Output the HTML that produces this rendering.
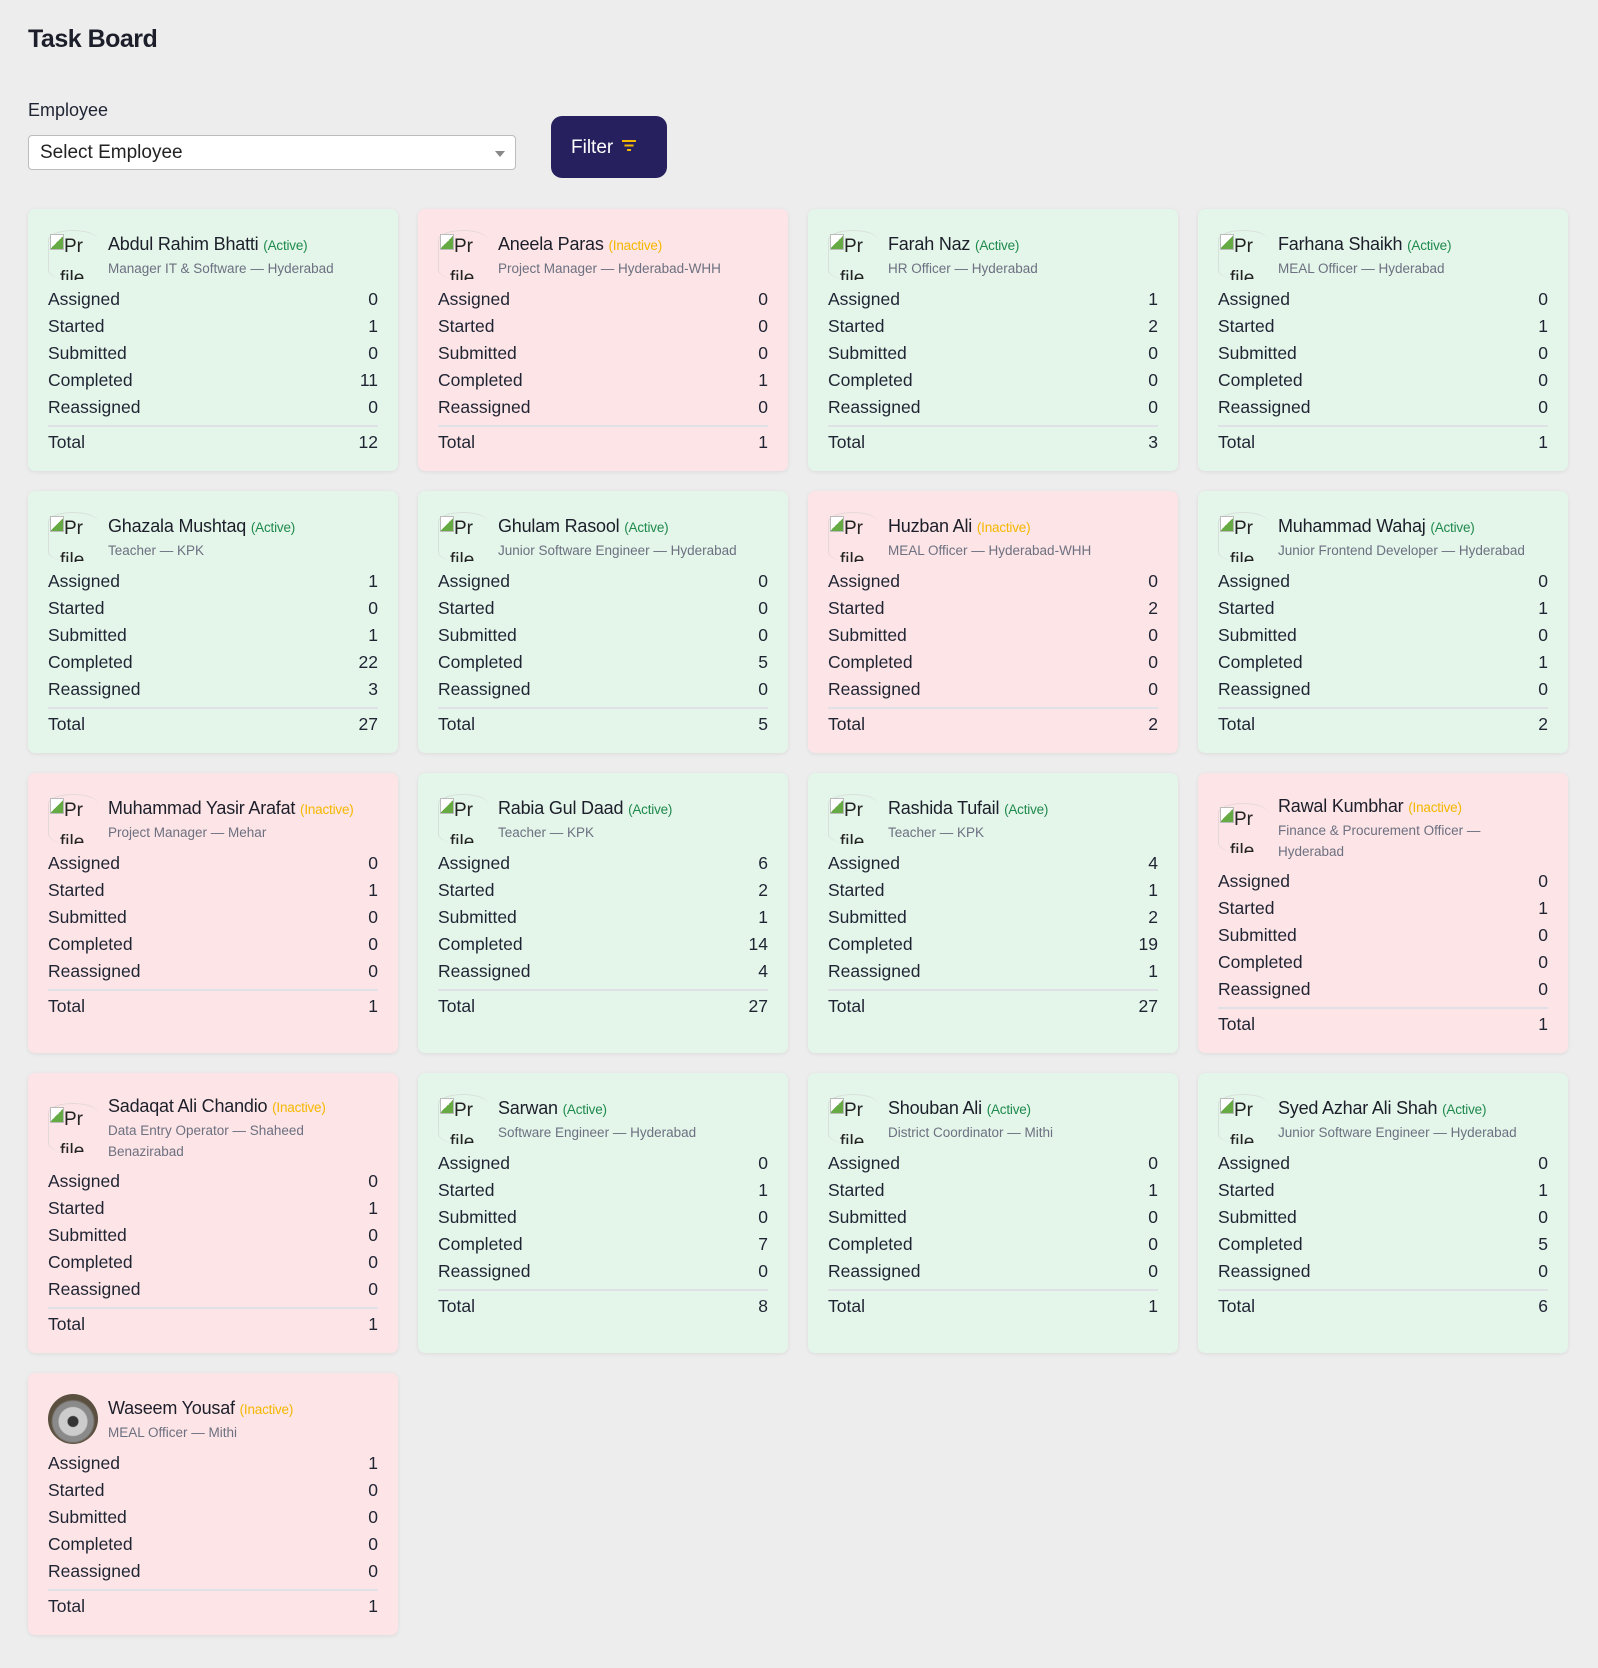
<!DOCTYPE html>
<html><head><meta charset="utf-8"><style>
*{box-sizing:border-box;margin:0;padding:0}
body{width:1598px;height:1668px;background:#ededed;font-family:"Liberation Sans",sans-serif;color:#1f2433;position:relative;overflow:hidden}
h1{position:absolute;left:28px;top:25px;font-size:25px;font-weight:bold;letter-spacing:-0.5px;color:#1c1f2a}
.lbl{position:absolute;left:28px;top:100px;font-size:18px;color:#1f2433}
.sel{position:absolute;left:28px;top:135px;width:488px;height:35px;background:#fff;border:1px solid #bcbcbc;border-radius:4px;font-size:19px;padding:6px 11px;color:#222}
.sel:after{content:"";position:absolute;right:10px;top:15px;border-left:5px solid transparent;border-right:5px solid transparent;border-top:6px solid #888}
.btn{position:absolute;left:551px;top:116px;width:116px;height:62px;background:#26215e;border-radius:11px;color:#fff;font-size:19px;padding:21px 0 0 20px}
.btn svg{position:absolute;left:70px;top:23px}
.grid{position:absolute;left:28px;top:209px;width:1540px;display:grid;grid-template-columns:repeat(4,370px);column-gap:20px;row-gap:20px}
.card{border-radius:7px;padding:21px 20px 17px 20px;box-shadow:0 1px 4px rgba(0,0,0,.08)}
.g{background:#e4f5ea}.p{background:#fde4e6}
.hd{display:flex;align-items:center;min-height:50px;margin-bottom:6px}
.av{width:50px;height:50px;flex:none;margin-right:10px;position:relative;overflow:hidden;font-size:19px;color:#222}
.av .ic{position:absolute;left:2px;top:4px;width:14px;height:16px;border:1px solid #bbb;background:linear-gradient(135deg,#fff 50%,#6a4 50%)}
.av .t1{position:absolute;left:16px;top:6px}
.av .t2{position:absolute;left:12px;top:38px}
.av .bd{position:absolute;left:0;top:0;width:50px;height:50px;border-left:1px solid #ccc;border-top:1px solid #ccc;border-radius:50%/20%;opacity:.5}
.nm{font-size:18px;line-height:24px;color:#1c1f2a;letter-spacing:-0.2px}
.a{font-size:13.5px;color:#1e8a4c}.i{font-size:13.5px;color:#f5b800}
.sb{font-size:13.5px;line-height:21px;color:#6c7080}
.r{display:flex;justify-content:space-between;font-size:17.5px;height:27px;line-height:27px}
.tot{border-top:2px solid #dfe1e6;margin-top:4px;padding-top:2px;height:29px}
.koala{width:50px;height:50px;border-radius:50%;background:radial-gradient(circle at 50% 55%,#333 0 5px,#ccc 6px 14px,#8a8a8a 15px 20px,#5b5040 22px);flex:none;margin-right:10px}
</style></head><body>
<h1>Task Board</h1>
<div class="lbl">Employee</div>
<div class="sel">Select Employee</div>
<div class="btn">Filter<svg width="16" height="14"><path d="M1 2h14M3.5 6.5h9M6 11h4" stroke="#f5b800" stroke-width="2"/></svg></div>
<div class="grid">
<div class="card g"><div class="hd"><div class="av"><div class="bd"></div><div class="ic"></div><span class="t1">Pr</span><span class="t2">file</span></div><div><div class="nm">Abdul Rahim Bhatti <span class="a">(Active)</span></div><div class="sb">Manager IT &amp; Software — Hyderabad</div></div></div><div class="r"><span>Assigned</span><span>0</span></div><div class="r"><span>Started</span><span>1</span></div><div class="r"><span>Submitted</span><span>0</span></div><div class="r"><span>Completed</span><span>11</span></div><div class="r"><span>Reassigned</span><span>0</span></div><div class="r tot"><span>Total</span><span>12</span></div></div>
<div class="card p"><div class="hd"><div class="av"><div class="bd"></div><div class="ic"></div><span class="t1">Pr</span><span class="t2">file</span></div><div><div class="nm">Aneela Paras <span class="i">(Inactive)</span></div><div class="sb">Project Manager — Hyderabad-WHH</div></div></div><div class="r"><span>Assigned</span><span>0</span></div><div class="r"><span>Started</span><span>0</span></div><div class="r"><span>Submitted</span><span>0</span></div><div class="r"><span>Completed</span><span>1</span></div><div class="r"><span>Reassigned</span><span>0</span></div><div class="r tot"><span>Total</span><span>1</span></div></div>
<div class="card g"><div class="hd"><div class="av"><div class="bd"></div><div class="ic"></div><span class="t1">Pr</span><span class="t2">file</span></div><div><div class="nm">Farah Naz <span class="a">(Active)</span></div><div class="sb">HR Officer — Hyderabad</div></div></div><div class="r"><span>Assigned</span><span>1</span></div><div class="r"><span>Started</span><span>2</span></div><div class="r"><span>Submitted</span><span>0</span></div><div class="r"><span>Completed</span><span>0</span></div><div class="r"><span>Reassigned</span><span>0</span></div><div class="r tot"><span>Total</span><span>3</span></div></div>
<div class="card g"><div class="hd"><div class="av"><div class="bd"></div><div class="ic"></div><span class="t1">Pr</span><span class="t2">file</span></div><div><div class="nm">Farhana Shaikh <span class="a">(Active)</span></div><div class="sb">MEAL Officer — Hyderabad</div></div></div><div class="r"><span>Assigned</span><span>0</span></div><div class="r"><span>Started</span><span>1</span></div><div class="r"><span>Submitted</span><span>0</span></div><div class="r"><span>Completed</span><span>0</span></div><div class="r"><span>Reassigned</span><span>0</span></div><div class="r tot"><span>Total</span><span>1</span></div></div>
<div class="card g"><div class="hd"><div class="av"><div class="bd"></div><div class="ic"></div><span class="t1">Pr</span><span class="t2">file</span></div><div><div class="nm">Ghazala Mushtaq <span class="a">(Active)</span></div><div class="sb">Teacher — KPK</div></div></div><div class="r"><span>Assigned</span><span>1</span></div><div class="r"><span>Started</span><span>0</span></div><div class="r"><span>Submitted</span><span>1</span></div><div class="r"><span>Completed</span><span>22</span></div><div class="r"><span>Reassigned</span><span>3</span></div><div class="r tot"><span>Total</span><span>27</span></div></div>
<div class="card g"><div class="hd"><div class="av"><div class="bd"></div><div class="ic"></div><span class="t1">Pr</span><span class="t2">file</span></div><div><div class="nm">Ghulam Rasool <span class="a">(Active)</span></div><div class="sb">Junior Software Engineer — Hyderabad</div></div></div><div class="r"><span>Assigned</span><span>0</span></div><div class="r"><span>Started</span><span>0</span></div><div class="r"><span>Submitted</span><span>0</span></div><div class="r"><span>Completed</span><span>5</span></div><div class="r"><span>Reassigned</span><span>0</span></div><div class="r tot"><span>Total</span><span>5</span></div></div>
<div class="card p"><div class="hd"><div class="av"><div class="bd"></div><div class="ic"></div><span class="t1">Pr</span><span class="t2">file</span></div><div><div class="nm">Huzban Ali <span class="i">(Inactive)</span></div><div class="sb">MEAL Officer — Hyderabad-WHH</div></div></div><div class="r"><span>Assigned</span><span>0</span></div><div class="r"><span>Started</span><span>2</span></div><div class="r"><span>Submitted</span><span>0</span></div><div class="r"><span>Completed</span><span>0</span></div><div class="r"><span>Reassigned</span><span>0</span></div><div class="r tot"><span>Total</span><span>2</span></div></div>
<div class="card g"><div class="hd"><div class="av"><div class="bd"></div><div class="ic"></div><span class="t1">Pr</span><span class="t2">file</span></div><div><div class="nm">Muhammad Wahaj <span class="a">(Active)</span></div><div class="sb">Junior Frontend Developer — Hyderabad</div></div></div><div class="r"><span>Assigned</span><span>0</span></div><div class="r"><span>Started</span><span>1</span></div><div class="r"><span>Submitted</span><span>0</span></div><div class="r"><span>Completed</span><span>1</span></div><div class="r"><span>Reassigned</span><span>0</span></div><div class="r tot"><span>Total</span><span>2</span></div></div>
<div class="card p"><div class="hd"><div class="av"><div class="bd"></div><div class="ic"></div><span class="t1">Pr</span><span class="t2">file</span></div><div><div class="nm">Muhammad Yasir Arafat <span class="i">(Inactive)</span></div><div class="sb">Project Manager — Mehar</div></div></div><div class="r"><span>Assigned</span><span>0</span></div><div class="r"><span>Started</span><span>1</span></div><div class="r"><span>Submitted</span><span>0</span></div><div class="r"><span>Completed</span><span>0</span></div><div class="r"><span>Reassigned</span><span>0</span></div><div class="r tot"><span>Total</span><span>1</span></div></div>
<div class="card g"><div class="hd"><div class="av"><div class="bd"></div><div class="ic"></div><span class="t1">Pr</span><span class="t2">file</span></div><div><div class="nm">Rabia Gul Daad <span class="a">(Active)</span></div><div class="sb">Teacher — KPK</div></div></div><div class="r"><span>Assigned</span><span>6</span></div><div class="r"><span>Started</span><span>2</span></div><div class="r"><span>Submitted</span><span>1</span></div><div class="r"><span>Completed</span><span>14</span></div><div class="r"><span>Reassigned</span><span>4</span></div><div class="r tot"><span>Total</span><span>27</span></div></div>
<div class="card g"><div class="hd"><div class="av"><div class="bd"></div><div class="ic"></div><span class="t1">Pr</span><span class="t2">file</span></div><div><div class="nm">Rashida Tufail <span class="a">(Active)</span></div><div class="sb">Teacher — KPK</div></div></div><div class="r"><span>Assigned</span><span>4</span></div><div class="r"><span>Started</span><span>1</span></div><div class="r"><span>Submitted</span><span>2</span></div><div class="r"><span>Completed</span><span>19</span></div><div class="r"><span>Reassigned</span><span>1</span></div><div class="r tot"><span>Total</span><span>27</span></div></div>
<div class="card p"><div class="hd"><div class="av"><div class="bd"></div><div class="ic"></div><span class="t1">Pr</span><span class="t2">file</span></div><div><div class="nm">Rawal Kumbhar <span class="i">(Inactive)</span></div><div class="sb">Finance &amp; Procurement Officer —<br>Hyderabad</div></div></div><div class="r"><span>Assigned</span><span>0</span></div><div class="r"><span>Started</span><span>1</span></div><div class="r"><span>Submitted</span><span>0</span></div><div class="r"><span>Completed</span><span>0</span></div><div class="r"><span>Reassigned</span><span>0</span></div><div class="r tot"><span>Total</span><span>1</span></div></div>
<div class="card p"><div class="hd"><div class="av"><div class="bd"></div><div class="ic"></div><span class="t1">Pr</span><span class="t2">file</span></div><div><div class="nm">Sadaqat Ali Chandio <span class="i">(Inactive)</span></div><div class="sb">Data Entry Operator — Shaheed<br>Benazirabad</div></div></div><div class="r"><span>Assigned</span><span>0</span></div><div class="r"><span>Started</span><span>1</span></div><div class="r"><span>Submitted</span><span>0</span></div><div class="r"><span>Completed</span><span>0</span></div><div class="r"><span>Reassigned</span><span>0</span></div><div class="r tot"><span>Total</span><span>1</span></div></div>
<div class="card g"><div class="hd"><div class="av"><div class="bd"></div><div class="ic"></div><span class="t1">Pr</span><span class="t2">file</span></div><div><div class="nm">Sarwan <span class="a">(Active)</span></div><div class="sb">Software Engineer — Hyderabad</div></div></div><div class="r"><span>Assigned</span><span>0</span></div><div class="r"><span>Started</span><span>1</span></div><div class="r"><span>Submitted</span><span>0</span></div><div class="r"><span>Completed</span><span>7</span></div><div class="r"><span>Reassigned</span><span>0</span></div><div class="r tot"><span>Total</span><span>8</span></div></div>
<div class="card g"><div class="hd"><div class="av"><div class="bd"></div><div class="ic"></div><span class="t1">Pr</span><span class="t2">file</span></div><div><div class="nm">Shouban Ali <span class="a">(Active)</span></div><div class="sb">District Coordinator — Mithi</div></div></div><div class="r"><span>Assigned</span><span>0</span></div><div class="r"><span>Started</span><span>1</span></div><div class="r"><span>Submitted</span><span>0</span></div><div class="r"><span>Completed</span><span>0</span></div><div class="r"><span>Reassigned</span><span>0</span></div><div class="r tot"><span>Total</span><span>1</span></div></div>
<div class="card g"><div class="hd"><div class="av"><div class="bd"></div><div class="ic"></div><span class="t1">Pr</span><span class="t2">file</span></div><div><div class="nm">Syed Azhar Ali Shah <span class="a">(Active)</span></div><div class="sb">Junior Software Engineer — Hyderabad</div></div></div><div class="r"><span>Assigned</span><span>0</span></div><div class="r"><span>Started</span><span>1</span></div><div class="r"><span>Submitted</span><span>0</span></div><div class="r"><span>Completed</span><span>5</span></div><div class="r"><span>Reassigned</span><span>0</span></div><div class="r tot"><span>Total</span><span>6</span></div></div>
<div class="card p"><div class="hd"><div class="koala"></div><div><div class="nm">Waseem Yousaf <span class="i">(Inactive)</span></div><div class="sb">MEAL Officer — Mithi</div></div></div><div class="r"><span>Assigned</span><span>1</span></div><div class="r"><span>Started</span><span>0</span></div><div class="r"><span>Submitted</span><span>0</span></div><div class="r"><span>Completed</span><span>0</span></div><div class="r"><span>Reassigned</span><span>0</span></div><div class="r tot"><span>Total</span><span>1</span></div></div>
</div>
</body></html>
